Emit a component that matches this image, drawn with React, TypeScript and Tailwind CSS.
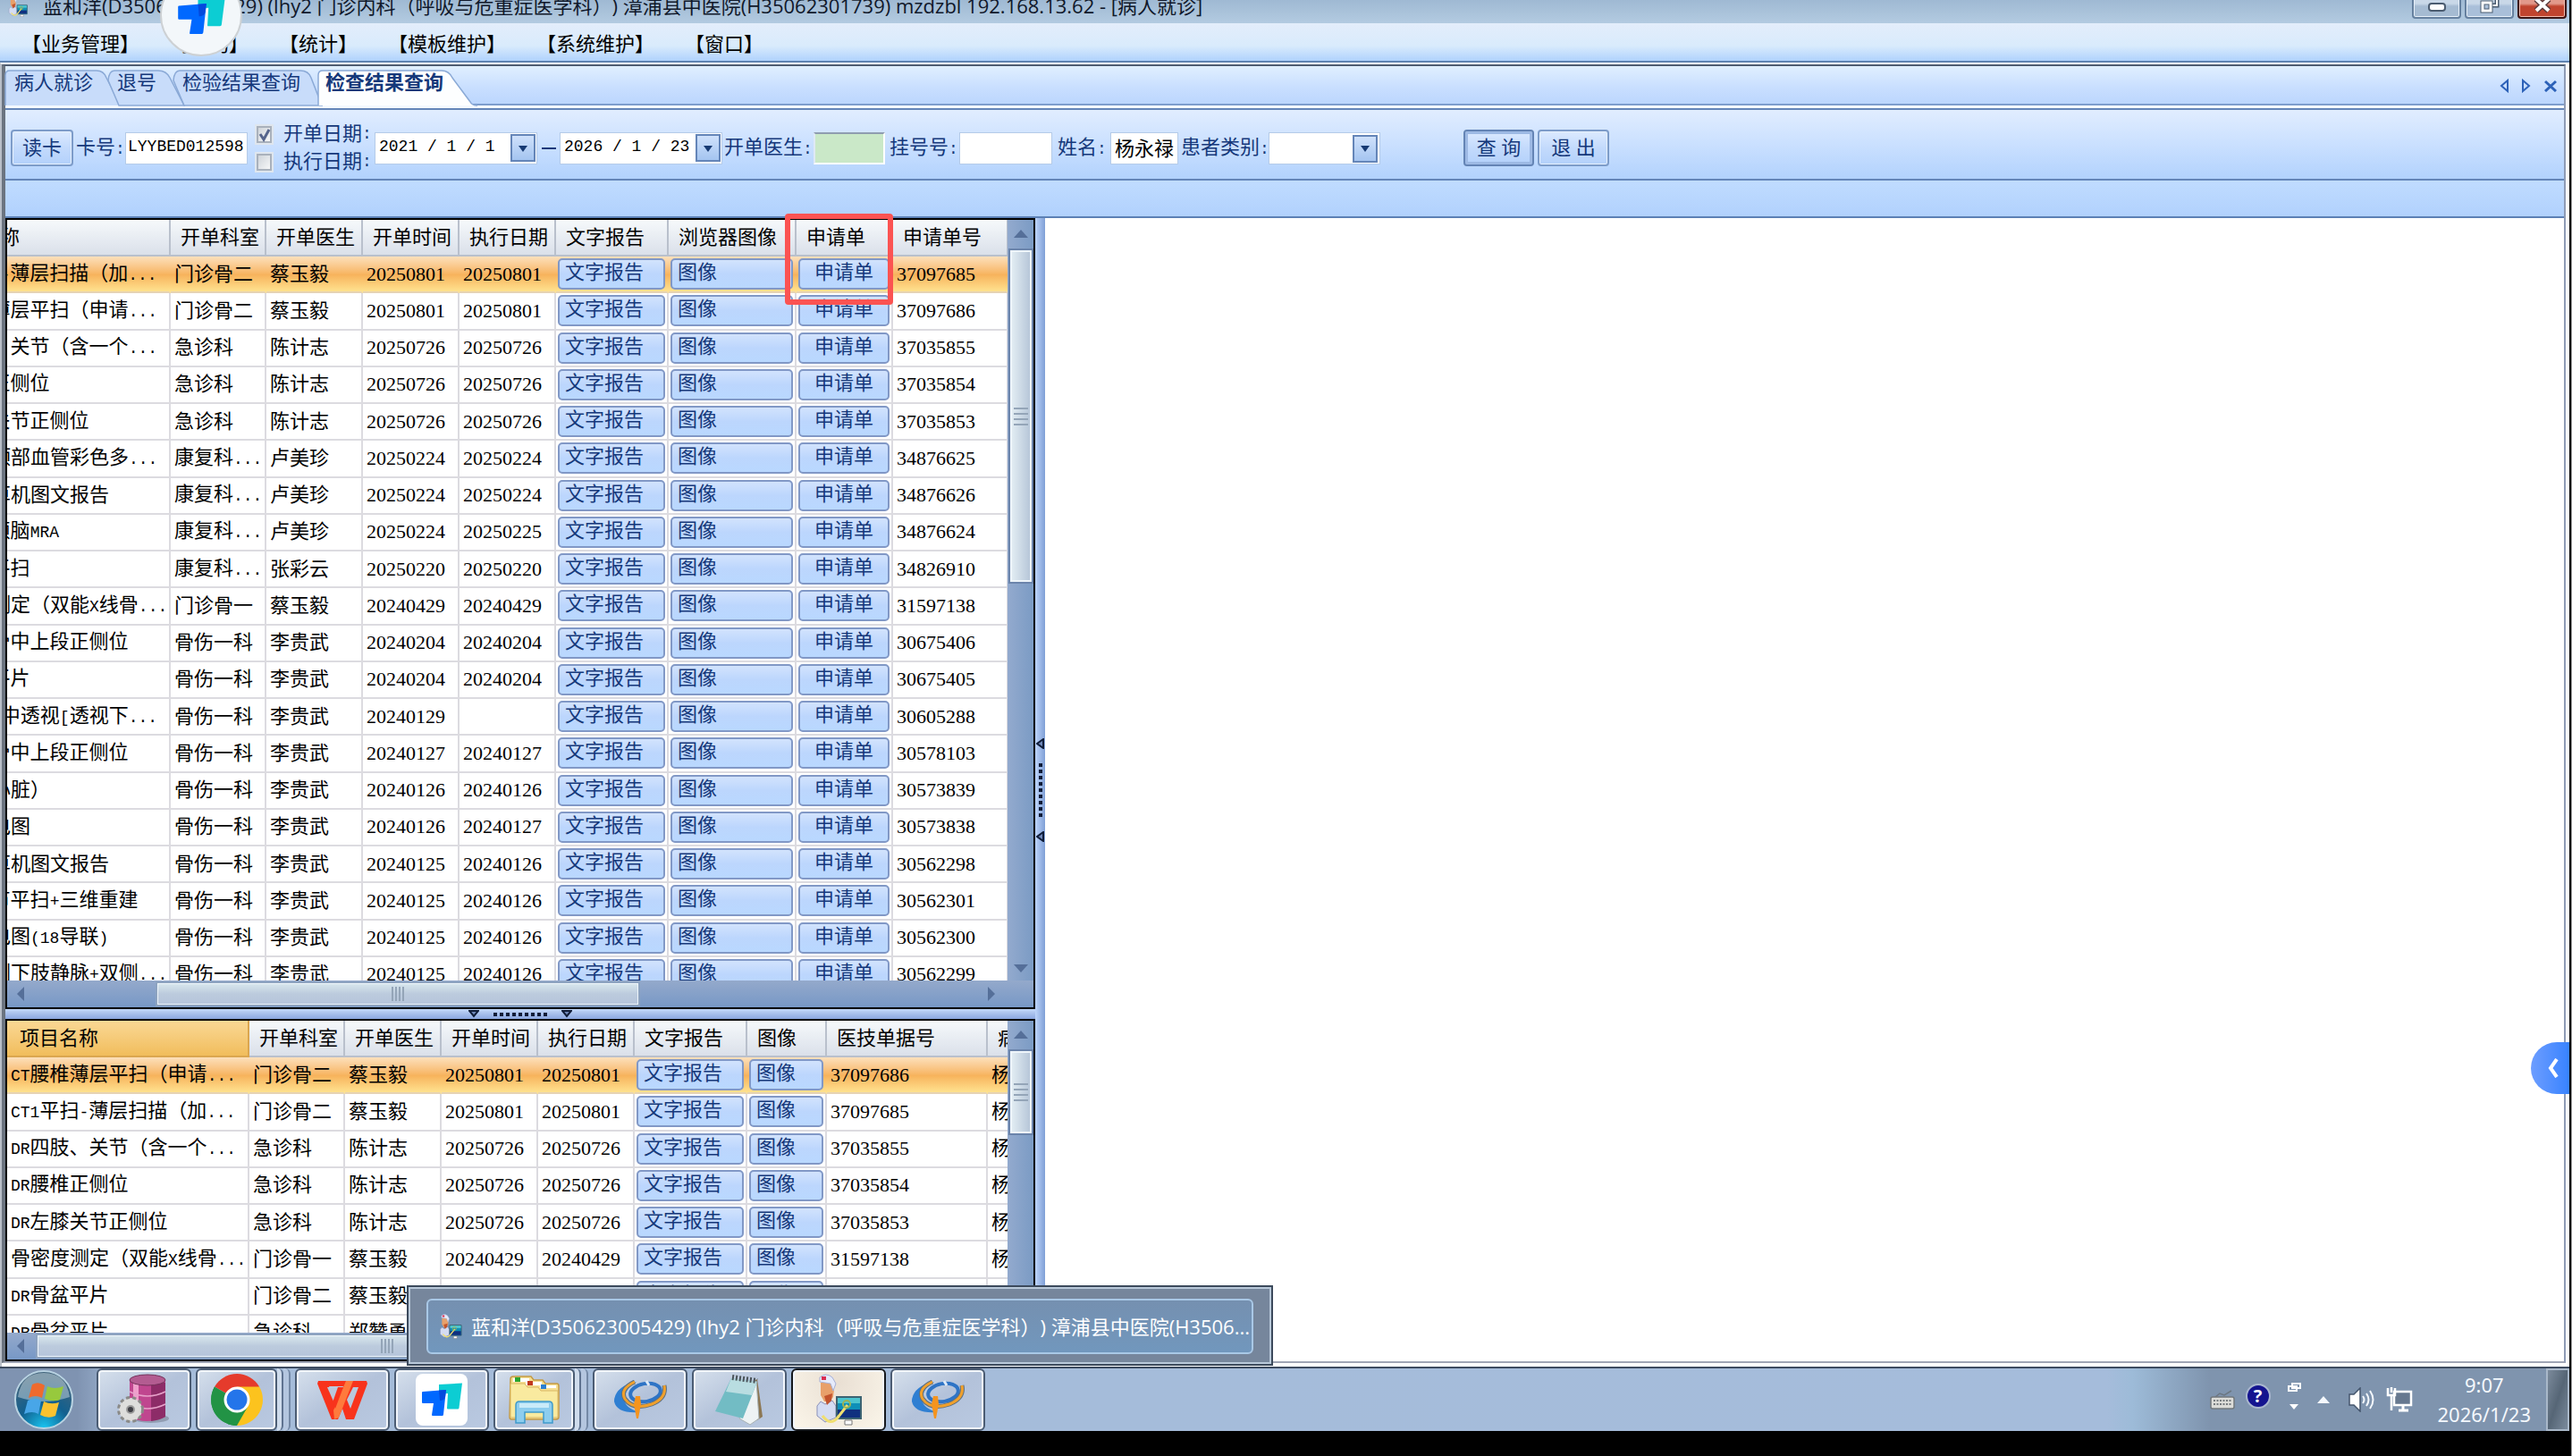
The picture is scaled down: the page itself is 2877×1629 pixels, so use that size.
import type { ReactNode } from "react";
import { clsx } from "clsx";

type Row = {
  name: string;
  dept: string;
  doctor: string;
  ordered: string;
  executed: string;
  no: string;
};

type Column = {
  title: string;
  width: string;
  field?: keyof Row;
  button?: string;
  center?: boolean;
  text?: string;
};

const examRows: Row[] = [
  { name: "CT1平扫-薄层扫描（加...", dept: "门诊骨二", doctor: "蔡玉毅", ordered: "20250801", executed: "20250801", no: "37097685" },
  { name: "CT腰椎薄层平扫（申请...", dept: "门诊骨二", doctor: "蔡玉毅", ordered: "20250801", executed: "20250801", no: "37097686" },
  { name: "DR四肢、关节（含一个...", dept: "急诊科", doctor: "陈计志", ordered: "20250726", executed: "20250726", no: "37035855" },
  { name: "DR腰椎正侧位", dept: "急诊科", doctor: "陈计志", ordered: "20250726", executed: "20250726", no: "37035854" },
  { name: "DR左膝关节正侧位", dept: "急诊科", doctor: "陈计志", ordered: "20250726", executed: "20250726", no: "37035853" },
  { name: "彩超双颈部血管彩色多...", dept: "康复科...", doctor: "卢美珍", ordered: "20250224", executed: "20250224", no: "34876625" },
  { name: "加收计算机图文报告", dept: "康复科...", doctor: "卢美珍", ordered: "20250224", executed: "20250224", no: "34876626" },
  { name: "MR平扫颅脑MRA", dept: "康复科...", doctor: "卢美珍", ordered: "20250224", executed: "20250225", no: "34876624" },
  { name: "CT胸部平扫", dept: "康复科...", doctor: "张彩云", ordered: "20250220", executed: "20250220", no: "34826910" },
  { name: "骨密度测定（双能X线骨...", dept: "门诊骨一", doctor: "蔡玉毅", ordered: "20240429", executed: "20240429", no: "31597138" },
  { name: "DR左股骨中上段正侧位", dept: "骨伤一科", doctor: "李贵武", ordered: "20240204", executed: "20240204", no: "30675406" },
  { name: "DR骨盆平片", dept: "骨伤一科", doctor: "李贵武", ordered: "20240204", executed: "20240204", no: "30675405" },
  { name: "C型臂术中透视[透视下...", dept: "骨伤一科", doctor: "李贵武", ordered: "20240129", executed: "", no: "30605288" },
  { name: "DR左股骨中上段正侧位", dept: "骨伤一科", doctor: "李贵武", ordered: "20240127", executed: "20240127", no: "30578103" },
  { name: "彩超（心脏）", dept: "骨伤一科", doctor: "李贵武", ordered: "20240126", executed: "20240126", no: "30573839" },
  { name: "常规心电图", dept: "骨伤一科", doctor: "李贵武", ordered: "20240126", executed: "20240127", no: "30573838" },
  { name: "加收计算机图文报告", dept: "骨伤一科", doctor: "李贵武", ordered: "20240125", executed: "20240126", no: "30562298" },
  { name: "CT髋关节平扫+三维重建", dept: "骨伤一科", doctor: "李贵武", ordered: "20240125", executed: "20240126", no: "30562301" },
  { name: "常规心电图(18导联)", dept: "骨伤一科", doctor: "李贵武", ordered: "20240125", executed: "20240126", no: "30562300" },
  { name: "彩超双侧下肢静脉+双侧...", dept: "骨伤一科", doctor: "李贵武", ordered: "20240125", executed: "20240126", no: "30562299" },
];

const reportRows: Row[] = [
  examRows[1],
  examRows[0],
  examRows[2],
  examRows[3],
  examRows[4],
  examRows[9],
  { name: "DR骨盆平片", dept: "门诊骨二", doctor: "蔡玉毅", ordered: "20240204", executed: "20240204", no: "30675405" },
  { name: "DR骨盆平片", dept: "急诊科", doctor: "郑赞勇", ordered: "20240204", executed: "20240204", no: "30675404" },
];

const examColumns: Column[] = [
  { title: "项目名称", width: "w-[271px]", field: "name" },
  { title: "开单科室", width: "w-[107px]", field: "dept" },
  { title: "开单医生", width: "w-[108px]", field: "doctor" },
  { title: "开单时间", width: "w-[108px]", field: "ordered" },
  { title: "执行日期", width: "w-[108px]", field: "executed" },
  { title: "文字报告", width: "w-[126px]", button: "文字报告" },
  { title: "浏览器图像", width: "w-[143px]", button: "图像" },
  { title: "申请单", width: "w-[108px]", button: "申请单", center: true },
  { title: "申请单号", width: "w-[129px]", field: "no" },
];

const reportColumns: Column[] = [
  { title: "项目名称", width: "w-[271px]", field: "name" },
  { title: "开单科室", width: "w-[107px]", field: "dept" },
  { title: "开单医生", width: "w-[108px]", field: "doctor" },
  { title: "开单时间", width: "w-[108px]", field: "ordered" },
  { title: "执行日期", width: "w-[108px]", field: "executed" },
  { title: "文字报告", width: "w-[126px]", button: "文字报告" },
  { title: "图像", width: "w-[89px]", button: "图像" },
  { title: "医技单据号", width: "w-[180px]", field: "no" },
  { title: "病人姓名", width: "w-[108px]", text: "杨永禄" },
];

const menus = ["业务管理", "查询", "统计", "模板维护", "系统维护", "窗口"];

// Half-width characters are set in a monospace so that two take one CJK cell.
const Mixed = ({ text }: { text: string }) => (
  <>
    {text.split(/([\x20-\x7e]+)/).map((part, i) =>
      /^[\x20-\x7e]+$/.test(part) && !/^\d{8}$/.test(part) ? (
        <span key={i} className="text-[18px] [font-family:'Liberation_Mono',monospace]">{part}</span>
      ) : (
        part
      )
    )}
  </>
);

const Triangle = ({ dir, className }: { dir: "up" | "down" | "left" | "right"; className?: string }) => {
  const points = {
    up: "0,10 8,1 16,10",
    down: "0,2 8,11 16,2",
    left: "11,-2 11,14 3,6",
    right: "5,-2 5,14 13,6",
  };
  return (
    <svg viewBox="0 0 16 12" className={clsx("h-3 w-4 shrink-0 overflow-visible", className)}>
      <polygon points={points[dir]} fill="currentColor" />
    </svg>
  );
};

const TitleBar = () => (
  <header className="flex h-[26px] shrink-0 items-end justify-between overflow-hidden bg-linear-to-b from-[#9fb9d3] to-[#b3cbe1]">
    <div className="flex items-end pb-[7px] pl-2">
      <DoctorIcon className="mr-4 h-6 w-6" />
      <span className="whitespace-nowrap text-[22px] leading-[26px] text-[#10182a] [font-family:'Open_Sans','Noto_Sans_CJK_SC',sans-serif]">
        蓝和洋(D350623005429) (lhy2 门诊内科（呼吸与危重症医学科）) 漳浦县中医院(H35062301739) mzdzbl 192.168.13.62 - [病人就诊]
      </span>
    </div>
    <div className="flex gap-1 pr-[3px] pb-[5px]">
      <button aria-label="最小化" className="flex h-[34px] w-[55px] items-end justify-center rounded-b border-2 border-[#65809f] bg-linear-to-b from-[#c9d8e8] from-50% to-[#a5bbd2] to-60% pb-1.5 shadow-[inset_0_0_0_1px_#e6eff8]">
        <span className="h-2.5 w-5 rounded-sm border-2 border-[#4b5c70] bg-white" />
      </button>
      <button aria-label="还原" className="flex h-[34px] w-[55px] items-end justify-center rounded-b border-2 border-[#65809f] bg-linear-to-b from-[#c9d8e8] from-50% to-[#a9bfd9] to-60% pb-1 shadow-[inset_0_0_0_1px_#e6eff8]">
        <svg viewBox="0 0 22 20" className="h-5 w-[22px]" fill="none">
          <path d="M8 2h11v9h-6" stroke="#4b5c70" strokeWidth="5" />
          <path d="M8 2h11v9h-6" stroke="#fff" strokeWidth="2" />
          <path d="M3 8h9v9H3z" stroke="#4b5c70" strokeWidth="5" />
          <path d="M3 8h9v9H3z" stroke="#fff" strokeWidth="3" />
        </svg>
      </button>
      <button aria-label="关闭" className="flex h-[34px] w-[55px] items-end justify-center rounded-b border-2 border-[#3d1414] bg-linear-to-b from-[#e2998b] from-50% to-[#c0442f] to-60% pb-1 shadow-[inset_0_0_0_1px_#f2b9ac]">
        <svg viewBox="0 0 22 18" className="h-[18px] w-[22px]">
          <path d="M4 2l14 13M18 2L4 15" stroke="#5b3a3a" strokeWidth="7" />
          <path d="M4 2l14 13M18 2L4 15" stroke="#fff" strokeWidth="4" />
        </svg>
      </button>
    </div>
  </header>
);

const MenuBar = () => (
  <nav className="flex h-11 shrink-0 items-center gap-[34px] border-b-2 border-[#5f83b1] bg-linear-to-b from-[#e3edfb] via-[#d9ebfc] via-60% to-[#b0d2fd] pt-1.5 pl-6 text-black">
    {menus.map((menu) => (
      <button key={menu} className="whitespace-nowrap leading-7">{`【${menu}】`}</button>
    ))}
  </nav>
);

const Tab = ({ label, width, path, active }: { label: string; width: string; path: string; active?: boolean }) => (
  <button
    role="tab"
    aria-selected={!!active}
    className={clsx("relative h-10 shrink-0 pb-2.5 text-left leading-[30px] whitespace-nowrap text-[#15387a]", width, active && "z-10 font-bold text-[#0d2f73]")}
  >
    <svg className="absolute inset-0 h-10 w-full overflow-visible">
      <path d={path} fill={active ? "#fdfeff" : "#c8dcfa"} stroke="#8aa9d6" strokeWidth="1.5" />
    </svg>
    <span className={clsx("relative", active ? "pl-2" : "pl-2.5")}>{label}</span>
  </button>
);

const TabStrip = () => (
  <div className="flex h-[49px] shrink-0 items-start justify-between border-b-2 border-[#6485b8] bg-linear-to-b from-[#e0efff] via-[#c9dfff] to-[#b8d4fd] pt-1 shadow-[inset_0_-3px_0_#f4f9ff,inset_0_-5px_0_#7d9dcc]">
    <div role="tablist" className="flex">
      <Tab label="病人就诊" width="w-[115px]" path="M0 40V6Q0 1 5 1H102Q110 1 113 9L129 40" />
      <Tab label="退号" width="w-[73px]" path="M0 12Q1 1 7 1H56Q65 1 69 9L85 40H12Z" />
      <Tab label="检验结果查询" width="w-[162px]" path="M0 12Q1 1 7 1H142Q151 1 154 9L166 40H12Z" />
      <Tab label="检查结果查询" width="w-[178px]" path="M0 40V6Q0 1 5 1H138Q146 1 150 9L170 36Q172 40 178 40" active />
    </div>
    <div className="flex gap-[15px] pt-2.5 pr-2 text-[#2d62b8]">
      <button aria-label="上一个">
        <svg viewBox="0 0 10 16" className="h-4 w-2.5" fill="none" stroke="currentColor" strokeWidth="2"><path d="M9 2v12L2 8z" /></svg>
      </button>
      <button aria-label="下一个">
        <svg viewBox="0 0 10 16" className="h-4 w-2.5" fill="none" stroke="currentColor" strokeWidth="2"><path d="M1 2v12l7-6z" /></svg>
      </button>
      <button aria-label="关闭页签">
        <svg viewBox="0 0 14 14" className="h-3.5 w-3.5" stroke="currentColor" strokeWidth="3"><path d="M1 2l12 11M13 2L1 13" /></svg>
      </button>
    </div>
  </div>
);

const DropArrow = () => (
  <span className="flex h-[31px] w-7 items-center justify-center border-2 border-[#6485b8] bg-linear-to-b from-[#cfe1fb] to-[#a4c4f0] text-[#173a73]">
    <svg viewBox="0 0 10 8" className="h-2 w-2.5"><path d="M0 1h10L5 8z" fill="currentColor" /></svg>
  </span>
);

const DateBox = ({ label, value }: { label: string; value: string }) => (
  <div className="flex h-9 w-[182px] items-center border border-[#b5cbe8] bg-white pr-px">
    <input aria-label={label} defaultValue={value} className="w-full min-w-0 pb-1 pl-1 text-[18px] text-black [font-family:'Liberation_Mono',monospace] outline-none" />
    <button type="button" aria-label={`选择${label}`} className="shrink-0"><DropArrow /></button>
  </div>
);

const DateCheck = ({ label, checked }: { label: string; checked?: boolean }) => (
  <label className="flex h-[31px] items-center">
    <span className="relative mr-[11px] flex h-[23px] w-[21px] border-2 border-[#dfe6ee]">
      <input type="checkbox" defaultChecked={checked} className="h-full w-full appearance-none border-2 border-[#a9b1bc] bg-linear-to-br from-[#cfd4da] to-[#f6f7f8]" />
      {checked && (
        <svg viewBox="0 0 17 19" className="pointer-events-none absolute inset-0 h-full w-full" fill="none">
          <path d="M4 9l4 6 6-11" stroke="#55648c" strokeWidth="3" />
        </svg>
      )}
    </span>
    <Mixed text={label} />
  </label>
);

const textBox = "h-9 border border-[#b5cbe8] bg-white text-black outline-none";

const toolButton =
  "h-[41px] rounded border-2 border-[#7d9cc9] bg-linear-to-b from-[#dceaff] via-[#c3dafc] to-[#b3d1fb] shadow-[inset_0_0_0_1px_#e6f0ff]";

const FilterBar = () => (
  <form className="flex h-[79px] shrink-0 items-center border-b-2 border-[#6485b8] bg-linear-to-b from-[#e1edff] via-[#cae0ff] to-[#b2d2fd] pt-2 pl-1.5 text-[#15387a] whitespace-nowrap">
    <button type="button" className={clsx(toolButton, "mr-[3px] w-[70px]")}>读卡</button>
    <label htmlFor="card" className="w-[55px]"><Mixed text="卡号:" /></label>
    <input id="card" defaultValue="LYYBED012598" className={clsx(textBox, "w-[137px] pb-1 pl-0.5 text-[18px] [font-family:'Liberation_Mono',monospace]")} />
    <div className="ml-2 w-[134px]">
      <DateCheck label="开单日期:" checked />
      <DateCheck label="执行日期:" />
    </div>
    <DateBox label="开始日期" value="2021 / 1 / 1" />
    <span className="flex w-[25px] justify-center"><span className="h-0.5 w-4 bg-[#15387a]" /></span>
    <DateBox label="结束日期" value="2026 / 1 / 23" />
    <label htmlFor="doctor" className="w-[102px] pl-0.5"><Mixed text="开单医生:" /></label>
    <input id="doctor" className="h-9 w-20 border-2 border-t-[#8f9db0] border-r-white border-b-white border-l-[#dfe9f5] bg-[#cae8c8]" />
    <label htmlFor="reg" className="w-[83px] pl-[5px]"><Mixed text="挂号号:" /></label>
    <input id="reg" className={clsx(textBox, "w-[104px]")} />
    <label htmlFor="patient" className="w-[65px] pl-1.5"><Mixed text="姓名:" /></label>
    <input id="patient" defaultValue="杨永禄" className={clsx(textBox, "w-[76px] pb-1 pl-1")} />
    <label htmlFor="kind" className="w-[101px] pl-[3px]"><Mixed text="患者类别:" /></label>
    <div className="relative w-[125px]">
      <select id="kind" className={clsx(textBox, "block w-full appearance-none")}>
        <option></option>
      </select>
      <span className="pointer-events-none absolute top-[3px] right-[3px]"><DropArrow /></span>
    </div>
    <button type="submit" className={clsx(toolButton, "ml-[93px] w-[79px] border-[#6484b5] shadow-[inset_0_0_0_3px_#9db9e4]")}>查 询</button>
    <button type="button" className={clsx(toolButton, "ml-1 w-20")}>退 出</button>
  </form>
);

const cellButton =
  "block h-[35px] w-full rounded-[5px] border-2 border-[#8198c6] bg-linear-to-b from-[#d2e3fd] via-[#bcd6fd] via-50% to-[#b9d8ff] pb-1 leading-7 text-[#15387a]";

const Grid = ({ columns, rows, sorted, className }: { columns: Column[]; rows: Row[]; sorted?: boolean; className: string }) => (
  <table className={clsx("table-fixed border-separate border-spacing-0 whitespace-nowrap text-black", className)}>
    <thead>
      <tr className="h-[41px] bg-linear-to-b from-[#f6f9fb] to-[#d9dfe9]">
        {columns.map((col, i) => (
          <th
            key={col.title}
            className={clsx(
              "overflow-hidden border-r-2 border-b-2 p-0 text-left font-normal",
              i === 0 ? "pl-[14px]" : "pl-[11px]",
              i === 0 && sorted ? "border-[#dba64f] bg-linear-to-b from-[#fad894] to-[#f1bd5b]" : "border-[#b9c0cc]",
              col.width
            )}
          >
            {col.title}
          </th>
        ))}
      </tr>
    </thead>
    <tbody>
      {rows.map((row, r) => (
        <tr key={r} className={clsx("h-[41px]", r === 0 && "bg-linear-to-b from-[#fce0bb] via-[#f7b35c] via-50% to-[#ffe794]")}>
          {columns.map((col) => (
            <td
              key={col.title}
              className={clsx(
                "overflow-hidden border-r-2 border-b-2 p-0",
                r === 0 ? "border-r-transparent border-b-[#e6d3b4]" : "border-[#dcdbe0]",
                col.button ? "px-0.5" : "pl-1"
              )}
            >
              {col.button ? (
                <button className={clsx(cellButton, col.center ? "text-center" : "pl-1.5 text-left")}>{col.button}</button>
              ) : (
                <Mixed text={col.field ? row[col.field] : col.text ?? ""} />
              )}
            </td>
          ))}
        </tr>
      ))}
    </tbody>
  </table>
);

const VScroll = ({ thumb }: { thumb: string }) => (
  <div className="flex w-[29px] shrink-0 flex-col items-center bg-linear-to-r from-[#93aace] to-[#7b9bc4] text-[#556f99]">
    <Triangle dir="up" className="my-2.5" />
    <div className={clsx("flex w-7 flex-col items-center justify-center gap-1 border-2 border-[#6b84ab] bg-linear-to-r from-[#e6f0f5] to-[#b3c3d6] shadow-[inset_0_0_0_2px_#eef5fa]", thumb)}>
      <i className="h-0.5 w-4 bg-[#94a5b8]" />
      <i className="h-0.5 w-4 bg-[#94a5b8]" />
      <i className="h-0.5 w-4 bg-[#94a5b8]" />
      <i className="h-0.5 w-4 bg-[#94a5b8]" />
    </div>
    <Triangle dir="down" className="mt-auto mb-2" />
  </div>
);

const HScroll = ({ thumb }: { thumb: string }) => (
  <div className="flex h-[30px] shrink-0 items-center bg-linear-to-b from-[#94a9cb] to-[#7798c6] pr-10 pl-2 text-[#556f99]">
    <Triangle dir="left" />
    <div className={clsx("flex h-7 items-center justify-center gap-0.5 border-2 border-[#8da3c0] bg-linear-to-b from-[#d9e8ee] via-[#bccbdd] via-50% to-[#b6c5db] shadow-[inset_0_0_0_1px_#eef5fa]", thumb)}>
      <i className="h-4 w-0.5 bg-[#94a5b8]" />
      <i className="h-4 w-0.5 bg-[#94a5b8]" />
      <i className="h-4 w-0.5 bg-[#94a5b8]" />
      <i className="h-4 w-0.5 bg-[#94a5b8]" />
    </div>
    <Triangle dir="right" className="ml-auto" />
  </div>
);

const ExamPane = () => (
  <section className="relative flex min-h-0 flex-1 flex-col border-2 border-black">
    <div className="flex min-h-0 flex-1">
      <div className="min-w-0 flex-1 overflow-hidden bg-white">
        {/* scrolled 88px to the right */}
        <Grid columns={examColumns} rows={examRows} className="-ml-[88px] h-[866px] w-[1208px]" />
      </div>
      <VScroll thumb="h-[375px]" />
    </div>
    <HScroll thumb="ml-[142px] w-[542px]" />
    <div className="absolute top-[-7px] right-[157px] h-[102px] w-[121px] rounded border-[6px] border-[#fb5352]" />
  </section>
);

const ReportPane = () => (
  <section className="flex h-[383px] shrink-0 flex-col border-2 border-black">
    <div className="flex min-h-0 flex-1">
      <div className="min-w-0 flex-1 overflow-hidden bg-white">
        <Grid columns={reportColumns} rows={reportRows} sorted className="h-[371px] w-[1205px]" />
      </div>
      <VScroll thumb="h-24" />
    </div>
    <HScroll thumb="ml-2 w-[785px]" />
  </section>
);

const SplitDots = ({ vertical }: { vertical?: boolean }) => (
  <div className={clsx("flex items-center gap-[3px]", vertical ? "my-4 flex-col" : "mx-4")}>
    {Array.from({ length: 9 }, (_, i) => (
      <i key={i} className="h-1 w-1 bg-[#0f1c38]" />
    ))}
  </div>
);

const HSplitter = () => (
  <div className="flex h-[11px] shrink-0 items-center justify-center bg-linear-to-b from-[#c3d8f8] to-[#8aa6df]">
    <svg viewBox="0 0 12 9" className="h-[9px] w-3"><path d="M1 1h10L6 7z" fill="#7088b8" stroke="#0f1c38" strokeWidth="2" /></svg>
    <SplitDots />
    <svg viewBox="0 0 12 9" className="h-[9px] w-3"><path d="M1 1h10L6 7z" fill="#7088b8" stroke="#0f1c38" strokeWidth="2" /></svg>
  </div>
);

const VSplitter = () => (
  <div className="flex w-[11px] shrink-0 flex-col items-center justify-center bg-linear-to-r from-[#bdd4fa] to-[#7f9fd6]">
    <svg viewBox="0 0 9 12" className="h-3 w-[9px]"><path d="M8 1v10L1 6z" fill="#7088b8" stroke="#0f1c38" strokeWidth="2" /></svg>
    <SplitDots vertical />
    <svg viewBox="0 0 9 12" className="h-3 w-[9px]"><path d="M8 1v10L1 6z" fill="#7088b8" stroke="#0f1c38" strokeWidth="2" /></svg>
  </div>
);

const TodeskMark = ({ className }: { className: string }) => (
  <svg viewBox="0 0 58 58" className={className}>
    <path d="M26 12L52 10.500L48.500 38Q48.500 39.500 47 39.500H36Q35 39.500 35 38.500L36 22L26 22.500Z" fill="#0ccdd3" />
    <path d="M8 20L34 18L31 45.500Q31 47 29.500 47H19Q18 47 18 46L20 33H8Q7 33 7 32V21Q7 20 8 20Z" fill="#0068ff" />
    <path d="M26 18.600L34 18L33 26Q32 30 27 30Z" fill="#0449dd" />
  </svg>
);

const DoctorIcon = ({ className }: { className: string }) => (
  <svg viewBox="0 0 54 58" className={className}>
    <path d="M3 36L7 31L12 34L20 30L24 36L24 49L12 54L3 47Z" fill="#d4dcf2" stroke="#8b90b8" strokeWidth="1" />
    <path d="M7 10H20L22 18L21 26L17 31H11L7 24Z" fill="#e8a06a" />
    <path d="M11 25L20 22L19 30L14 35Z" fill="#c2532c" />
    <path d="M6 4Q13 -2 20 4L24 11L21 19L18 11L6 9Z" fill="#e6ebfb" stroke="#a7b1d6" strokeWidth="1" />
    <path d="M8 3h5v4H8z" fill="#d92f52" />
    <path d="M25 26H52V50H25Z" fill="#0e8fb8" stroke="#3c6372" strokeWidth="2" />
    <path d="M26 27H51V33H26Z" fill="#4cc4cf" />
    <path d="M26 40H51V49H26Z" fill="#10307f" />
    <path d="M34 52H42V57H34Z" fill="#fff" stroke="#777" strokeWidth="1" />
    <path d="M9 47Q18 59 26 49L37 35" stroke="#f0df70" strokeWidth="3" fill="none" />
    <circle cx="36" cy="34" r="4" fill="none" stroke="#9db254" strokeWidth="2" />
  </svg>
);

const StartOrb = () => (
  <svg viewBox="0 0 66 66" className="h-[66px] w-[66px]">
    <defs>
      <radialGradient id="orb" cx="0.5" cy="1" r="0.9">
        <stop offset="0" stopColor="#18c6f2" />
        <stop offset="0.5" stopColor="#12608f" />
        <stop offset="1" stopColor="#41647c" />
      </radialGradient>
    </defs>
    <circle cx="33" cy="33" r="32" fill="url(#orb)" stroke="#b9d3e2" strokeWidth="2" />
    <path d="M4 30Q8 3 33 3Q58 3 62 30Q33 40 4 30Z" fill="#d9e6ee" opacity="0.45" />
    <path d="M20 16Q27 12 34 17L31 31Q24 27 16 31Z" fill="#ef6a2d" />
    <path d="M37 18Q45 22 55 18L51 33Q43 36 34 32Z" fill="#97c93d" />
    <path d="M15 34Q23 30 30 34L27 49Q20 45 11 49Z" fill="#48a6e8" />
    <path d="M33 35Q41 39 50 36L46 51Q38 55 29 50Z" fill="#fbc22f" />
  </svg>
);

const DatabaseIcon = () => (
  <svg viewBox="0 0 60 58" className="h-[58px] w-[60px]">
    <ellipse cx="38" cy="50" rx="20" ry="5" fill="#6d7688" opacity="0.5" />
    <path d="M14 7V48Q32 58 54 48V7Z" fill="#c0468f" />
    <path d="M38 10H54V48Q48 52 38 53Z" fill="#8d2c68" />
    <path d="M18 10H24V50L18 48Z" fill="#ef9fcb" />
    <ellipse cx="34" cy="7" rx="20" ry="6" fill="#b35c91" stroke="#74315a" strokeWidth="1" />
    <path d="M14 20Q34 30 54 20M14 34Q34 44 54 34" stroke="#e7a1ca" strokeWidth="1.500" fill="none" />
    <circle cx="15" cy="40" r="13" fill="#d9d9d7" stroke="#8a8a88" strokeWidth="4" strokeDasharray="4 3" />
    <circle cx="15" cy="40" r="12" fill="#dededc" />
    <circle cx="15" cy="40" r="4" fill="#3f3f44" stroke="#9b9b9b" strokeWidth="2" />
  </svg>
);

const ChromeIcon = () => (
  <svg viewBox="0 0 58 58" className="h-[58px] w-[58px]">
    <path d="M29 29L4 14.500A29 29 0 0 1 54.100 14.500Z" fill="#e53b2c" />
    <path d="M29 29L54.100 14.500A29 29 0 0 1 29 58Z" fill="#fcc31e" />
    <path d="M29 29L29 58A29 29 0 0 1 4 14.500Z" fill="#229345" />
    <path d="M29 14.500H54.100L42 36.500L29 58L41.600 36.300Z" fill="#fcc31e" />
    <path d="M4 14.500L16.400 36L29 43.500L41 37L29 58A29 29 0 0 1 4 14.500Z" fill="#229345" />
    <circle cx="29" cy="29" r="14.500" fill="#fff" />
    <circle cx="29" cy="29" r="11.500" fill="#2475ea" />
  </svg>
);

const WpsIcon = () => (
  <svg viewBox="0 0 58 45" className="h-[45px] w-[58px]">
    <path d="M2 1H34L37 7H14L22 28L30 7L34 1H56L57 4L42 44H33L29 32L24 44H17L1 4Z" fill="#f8331c" />
    <path d="M33 1H41L25 42L20 44L19 34Z" fill="#ff7a3c" />
    <path d="M41 8H47L38 32L34 22Z" fill="#b9c8dc" />
    <path d="M12 8H27L20 26Z" fill="#b9c8dc" />
    <path d="M24 8H30L21 32L18 25Z" fill="#f8331c" />
  </svg>
);

const FolderIcon = () => (
  <svg viewBox="0 0 60 54" className="h-[54px] w-[60px]">
    <path d="M3 4Q3 1 6 1H26L29 5H39L42 9H55Q57 9 57 12V46Q57 49 54 49H4Q2 49 2 46Z" fill="#f6df92" stroke="#c39a45" strokeWidth="1.500" />
    <path d="M6 3H24V7H6ZM20 7H38V11H20ZM36 11H54V14H36Z" fill="#fff" />
    <path d="M8 2h6v5H8z" fill="#2aa52f" />
    <path d="M22 6h6v5h-6z" fill="#c1391f" />
    <path d="M37 10h6v5h-6z" fill="#2c7fd0" />
    <path d="M3 9H19L22 13H34L37 17H56V47H3Z" fill="#f9ea9f" stroke="#d9b765" strokeWidth="1" />
    <path d="M9 53V33Q9 29 13 29H46Q50 29 50 33V53H40V41H19V53Z" fill="#8dcdee" stroke="#3f9acb" strokeWidth="1.500" />
    <path d="M13 31H46V36H13Z" fill="#c9ebf9" />
  </svg>
);

const SwirlIcon = () => (
  <svg viewBox="0 0 60 44" className="h-11 w-[60px]" fill="none">
    <path d="M20 3Q1 10 1 24Q4 38 30 36Q10 31 13 18Q15 8 26 2Z" fill="#2f7fd2" />
    <ellipse cx="36" cy="14" rx="17" ry="10" stroke="#2e74c6" strokeWidth="4" transform="rotate(-10 36 14)" />
    <path d="M24 2Q7 10 13 21Q22 34 43 27Q60 20 57 6" stroke="#5d6f80" strokeWidth="5" />
    <path d="M24 2Q7 10 13 21Q22 34 43 27Q60 20 57 6" stroke="#f0a02c" strokeWidth="3" />
    <path d="M37 1L40 6" stroke="#dce9f7" strokeWidth="3" />
    <path d="M25 18H30L31 27L28 43H26L23 27Z" fill="#f5941e" />
  </svg>
);

const NotepadIcon = () => (
  <svg viewBox="0 0 56 58" className="h-[58px] w-14">
    <path d="M48 6L54 48L48 52L44 8Z" fill="#8c7753" />
    <path d="M47 8L50 50L40 57L28 50Z" fill="#eef3f4" stroke="#a8b2b5" strokeWidth="1" />
    <path d="M19 5L48 9L32 50L1 42Z" fill="#72bcc4" />
    <path d="M19 5L48 9L42 24L13 20Z" fill="#b9dde1" />
    <path d="M20 4L48 8" stroke="#4b545a" strokeWidth="6" strokeDasharray="2 2" />
  </svg>
);

const TaskButton = ({ label, active, stacked, children }: { label: string; active?: boolean; stacked?: boolean; children: ReactNode }) => (
  <div className="flex h-[70px] w-[106px]">
    <button
      aria-label={label}
      className={clsx(
        "flex flex-1 items-center justify-center rounded-md border-2 shadow-[inset_0_0_0_2px_#f2f6fb]",
        active
          ? "border-[#15181c] bg-radial-[at_50%_20%] from-[#e9dfd3] to-[#fbf6ea]"
          : "border-[#4b5c73] bg-linear-to-br from-[#d6e0ec] via-[#b3c2da] to-[#b9c9e1]"
      )}
    >
      {children}
    </button>
    {stacked && (
      <>
        <span className="w-[7px] rounded-r-md border-r-2 border-[#5f7390] bg-[#cfdcec]" />
        <span className="w-2 rounded-r-md border-r-2 border-[#7489a6] bg-[#b4c6df]" />
      </>
    )}
  </div>
);

const Tray = () => (
  <div className="ml-auto flex h-full items-center text-[#f4f8fd]">
    <svg viewBox="0 0 28 24" className="mr-3 h-6 w-7" fill="none">
      <path d="M6 9L11 5L16 7L24 2" stroke="#6b7681" strokeWidth="1.500" />
      <rect x="1" y="9" width="26" height="13" rx="2" fill="#dcdcd8" stroke="#73787d" strokeWidth="1.500" />
      <path d="M4 13H24M4 17H24" stroke="#777c80" strokeWidth="2" strokeDasharray="2 1.500" />
    </svg>
    <span className="mr-[19px] mb-2 flex h-7 w-7 items-center justify-center rounded-full border-2 border-[#a9b7ce] bg-[#14148f] text-[20px] font-bold leading-6 [font-family:'Noto_Sans',sans-serif]">?</span>
    <svg viewBox="0 0 16 32" className="mr-[17px] mb-2 h-8 w-4" fill="none">
      <path d="M5 2h9v5H5zM1 5h9v5H1z" fill="#7f94ae" stroke="#fff" strokeWidth="2" />
      <path d="M2 25h10l-5 6z" fill="#fff" />
    </svg>
    <svg viewBox="0 0 14 10" className="mr-5 h-2.5 w-3.5"><path d="M0 9L7 1L14 9Z" fill="#f4f8fd" /></svg>
    <svg viewBox="0 0 30 28" className="mr-[13px] h-7 w-[30px]" fill="none">
      <path d="M2 8H7L14 1V27L7 20H2Z" fill="#fff" stroke="#45566e" strokeWidth="1.500" />
      <path d="M17 10Q20 14 17 18M21 7Q26 14 21 21M25 4Q32 14 25 24" stroke="#f4f8fd" strokeWidth="2" />
    </svg>
    <svg viewBox="0 0 30 28" className="mr-7 h-7 w-[30px]" fill="none">
      <path d="M9 5H28V20H9Z" fill="#66788f" stroke="#fff" strokeWidth="2.500" />
      <path d="M14 26H25M19 21V25" stroke="#fff" strokeWidth="3" />
      <path d="M2 1V9H10V1M6 0V6M6 9V26" stroke="#fff" strokeWidth="2.500" />
    </svg>
    <div className="mr-[17px] text-center text-[22px] leading-[33px] [font-family:'Noto_Sans',sans-serif]">
      <div>9:07</div>
      <div>2026/1/23</div>
    </div>
    <button aria-label="显示桌面" className="h-full w-[26px] border-2 border-[#a9b8c9] bg-linear-to-br from-[#7c8b9c] via-[#566676] to-[#7b8b9d]" />
  </div>
);

const TaskBar = () => (
  <footer className="flex h-[72px] shrink-0 items-center border-t-2 border-[#3d4b60] bg-[linear-gradient(to_right,#7f93b1_0%,#7f93b1_3%,#a5bcd9_5%,#a5bcdb_82%,#9dbbd8_83%,#7f94ae_86%)]">
    <button aria-label="开始" className="mr-[26px] ml-4"><StartOrb /></button>
    <div className="flex gap-[5px]">
      <TaskButton label="数据库"><DatabaseIcon /></TaskButton>
      <TaskButton label="Chrome" stacked><ChromeIcon /></TaskButton>
      <TaskButton label="WPS"><WpsIcon /></TaskButton>
      <TaskButton label="远程控制"><TodeskMark className="h-[58px] w-[58px] rounded-lg bg-white" /></TaskButton>
      <TaskButton label="资源管理器" stacked><FolderIcon /></TaskButton>
      <TaskButton label="医院信息系统"><SwirlIcon /></TaskButton>
      <TaskButton label="记事本"><NotepadIcon /></TaskButton>
      <TaskButton label="门诊医生站" active><DoctorIcon className="h-[58px] w-[54px]" /></TaskButton>
      <TaskButton label="医院信息系统二"><SwirlIcon /></TaskButton>
    </div>
    <Tray />
  </footer>
);

const App = () => (
  <div className="relative flex h-screen flex-col overflow-hidden border-r border-[#9a9a9a] bg-black pr-0.5 text-[22px] leading-7 [font-family:'Liberation_Serif','Noto_Sans_CJK_SC',serif] [text-spacing-trim:space-all]">
    <TitleBar />
    <MenuBar />
    <main className="flex min-h-0 flex-1 flex-col border-t-2 border-l-2 border-white border-l-[#b9bfc8] bg-white pr-1 pb-1">
      <div className="flex min-h-0 flex-1 flex-col border-2 border-l-4 border-t-[#4e5c70] border-r-[#8e9bb5] border-b-[#9fa5b5] border-l-[#6b7480]">
        <TabStrip />
        <FilterBar />
        <div className="h-[42px] shrink-0 border-b-2 border-[#5c80b5] bg-linear-to-b from-[#c0dcff] to-[#b1d1fd]" />
        <div className="flex min-h-0 flex-1">
          <div className="flex w-[1152px] shrink-0 flex-col">
            <ExamPane />
            <HSplitter />
            <ReportPane />
          </div>
          <VSplitter />
          <div className="flex-1 bg-white" />
        </div>
      </div>
    </main>
    <TaskBar />
    <div className="h-7 shrink-0 bg-black" />

    {/* remote control handle hanging from the top edge */}
    <div className="absolute top-[-29px] left-[179px] flex h-[92px] w-[92px] items-center justify-center rounded-full border-2 border-[#cdd1d4] bg-[#f3f7fa]">
      <TodeskMark className="h-[68px] w-[68px]" />
    </div>

    <button aria-label="展开" className="absolute right-0.5 bottom-[405px] flex h-[58px] w-[43px] items-center justify-center rounded-l-full bg-linear-to-r from-[#6c9dff] to-[#3783ff] pl-1.5">
      <svg viewBox="0 0 12 22" className="h-[22px] w-3" fill="none"><path d="M10 1L3 11L10 21" stroke="#fff" strokeWidth="4" /></svg>
    </button>

    {/* taskbar preview */}
    <div className="absolute bottom-[101px] left-[455px] h-[90px] w-[969px] border-2 border-[#3c4a5c] bg-[#76869c] p-5 pt-[13px] pb-[11px] shadow-[inset_0_0_0_2px_#b9c9da]">
      <button className="flex h-full w-full items-center overflow-hidden rounded-md border-2 border-[#a9c8e6] bg-linear-to-b from-[#7590b0] to-[#7197bd] pl-3 whitespace-nowrap text-white">
        <DoctorIcon className="mr-2.5 h-7 w-[26px] shrink-0" />
        <span className="[font-family:'Open_Sans','Noto_Sans_CJK_SC',sans-serif]">
          蓝和洋(D350623005429) (lhy2 门诊内科（呼吸与危重症医学科）) 漳浦县中医院(H3506...
        </span>
      </button>
    </div>
  </div>
);

export default App;
